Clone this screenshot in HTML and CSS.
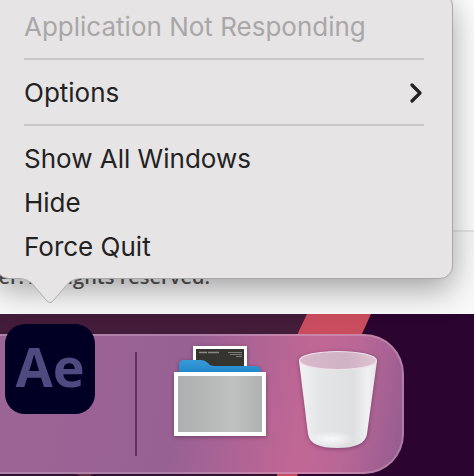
FILE: index.html
```html
<!DOCTYPE html>
<html lang="en">
<head>
    <meta charset="UTF-8">
    <meta name="viewport" content="width=device-width, initial-scale=1.0">
    <title>Dock Menu</title>
    <link rel="stylesheet" href="styles.css">
</head>
<body>
    <div class="browser-window">
        <footer class="page-footer">ber. All rights reserved.</footer>
    </div>

    <div class="desktop">
        <svg class="wallpaper" viewBox="0 0 474 162" preserveAspectRatio="xMinYMin slice" aria-hidden="true">
            <rect width="474" height="162" fill="#2b052f"/>
            <path d="M0 0H308L220 162H0Z" fill="#431c3a"/>
            <path d="M0 140H277V162H0Z" fill="#32102f"/>
            <path d="M307 0H371L297 162H277V140H240Z" fill="#c94d5e"/>
            <path d="M72 158H96L90 162H80Z" fill="#5e2c40"/>
        </svg>
        <div class="dock">
            <button class="dock-app" aria-label="After Effects">Ae</button>
            <span class="dock-divider"></span>
            <button class="dock-item dock-stack" aria-label="Folder stack">
                <svg width="92" height="92" viewBox="0 0 92 92">
                    <defs>
                        <linearGradient id="metal" x1="0" x2="1" y1="0" y2="0">
                            <stop offset="0" stop-color="#adb0b0"/>
                            <stop offset=".3" stop-color="#b4b7b6"/>
                            <stop offset=".65" stop-color="#bfc1c0"/>
                            <stop offset="1" stop-color="#afb2b2"/>
                        </linearGradient>
                        <linearGradient id="folder" x1="0" x2="0" y1="0" y2="1">
                            <stop offset="0" stop-color="#389bd8"/>
                            <stop offset="1" stop-color="#1b82c5"/>
                        </linearGradient>
                    </defs>
                    <path d="M19 0H73V30H19Z" fill="#fff"/>
                    <path d="M22 3H70V30H22Z" fill="#36342f"/>
                    <path d="M25 6.500H45" stroke="#8a8882" stroke-width="1.500" stroke-dasharray="8 1 11"/>
                    <path d="M54 6.500H68M56 8.500H68M62 10.500H68" stroke="#7d7b75" stroke-width="1"/>
                    <path d="M5 30V19Q5 14 10 14H27Q31 14 34 17L36 19Q38 20 41 20H82Q86 20 87 26V30Z" fill="url(#folder)"/>
                    <path d="M0 26H92V90H0Z" fill="#fff"/>
                    <path d="M4 30H88V86H4Z" fill="url(#metal)"/>
                </svg>
            </button>
            <button class="dock-item" aria-label="Trash">
                <svg width="80" height="100" viewBox="0 0 80 100">
                    <defs>
                        <linearGradient id="bin" x1="0" x2="1" y1="0" y2="0">
                            <stop offset="0" stop-color="#f2f2f4"/>
                            <stop offset=".25" stop-color="#e5e6e8"/>
                            <stop offset=".7" stop-color="#dddfe1"/>
                            <stop offset=".88" stop-color="#f1f1f3"/>
                            <stop offset="1" stop-color="#e4e5e7"/>
                        </linearGradient>
                        <linearGradient id="inside" x1="0" x2="1" y1="0" y2="0">
                            <stop offset="0" stop-color="#dab9cd"/>
                            <stop offset=".6" stop-color="#cfb2c5"/>
                            <stop offset="1" stop-color="#dec4d2"/>
                        </linearGradient>
                        <radialGradient id="base">
                            <stop offset="0" stop-color="#fff" stop-opacity=".8"/>
                            <stop offset="1" stop-color="#fff" stop-opacity="0"/>
                        </radialGradient>
                    </defs>
                    <path d="M1 11L10 84Q12 98 39 98Q67 98 69 84L79 11Z" fill="url(#bin)"/>
                    <ellipse cx="33" cy="89" rx="24" ry="8" fill="url(#base)"/>
                    <ellipse cx="40" cy="10.500" rx="38.500" ry="9" fill="url(#inside)" stroke="#eee0e9" stroke-width="1.200"/>
                </svg>
            </button>
        </div>
    </div>

    <div class="dock-menu" role="menu">
        <button class="menu-item" role="menuitem" disabled>Application Not Responding</button>
        <hr class="menu-separator">
        <button class="menu-item" role="menuitem" aria-haspopup="true">
            Options
            <svg width="14" height="20" viewBox="0 0 14 20" aria-hidden="true">
                <path d="M2 2L10 10L2 18" fill="none" stroke="#232223" stroke-width="3.200" stroke-linecap="round" stroke-linejoin="round"/>
            </svg>
        </button>
        <hr class="menu-separator">
        <button class="menu-item" role="menuitem">Show All Windows</button>
        <button class="menu-item" role="menuitem">Hide</button>
        <button class="menu-item" role="menuitem">Force Quit</button>
        <svg class="menu-arrow" width="60" height="28" viewBox="0 0 60 28" aria-hidden="true">
            <path d="M0 0V2Q8 2 13 7.500L26.500 23.500Q30 27.500 33.500 23.500L47 7.500Q52 2 60 2V0Z" fill="#e6e4e5"/>
            <path d="M0 1.500Q8 2 13 7.500L26.500 23.500Q30 27.500 33.500 23.500L47 7.500Q52 2 60 1.500" fill="none" stroke="#b0aeaf"/>
        </svg>
    </div>
</body>
</html>
```

FILE: styles.css
```css
* {
    box-sizing: border-box;
}
body {
    margin: 0;
    min-height: 100vh;
    display: flex;
    flex-direction: column;
    position: relative;
    overflow: hidden;
    font-family: Inter, "Liberation Sans", sans-serif;
}
button {
    border: none;
    background: none;
    padding: 0;
    font-family: inherit;
}

/* Web page behind the menu */
.browser-window {
    flex: 1;
    display: flex;
    flex-direction: column;
    justify-content: flex-end;
    background-color: #fdfdfd;
}
.page-footer {
    height: 84px;
    padding-top: 31px;
    margin-left: -14px;
    border-top: 2px solid #e6e6e6;
    background-color: #f9f9f9;
    color: #555;
    font-family: "Open Sans", sans-serif;
    font-size: 20px;
    font-weight: 600;
    line-height: 28px;
}

/* Dock */
.desktop {
    height: 162px;
    padding: 20px 70px 2px 0;
    position: relative;
    background-color: #2b052f;
}
.wallpaper {
    position: absolute;
    inset: 0;
    width: 100%;
    height: 100%;
}
.dock {
    position: relative;
    height: 140px;
    display: flex;
    align-items: center;
    justify-content: flex-end;
    gap: 32px;
    padding: 0 24px 8px 0;
    border: 2px solid rgba(255, 255, 255, 0.2);
    border-left: none;
    border-radius: 0 40px 40px 0;
    background: linear-gradient(100deg, #9d6595 0%, #986194 45%, #c26795 75%, #b86797 85%, #935b8e 100%) border-box;
}
.dock-app {
    width: 90px;
    height: 90px;
    margin-bottom: 62px;
    border-radius: 20px;
    background-color: #000025;
    color: #4f4b80;
    font-family: "Open Sans", sans-serif;
    font-size: 54px;
    font-weight: 700;
    line-height: 80px;
    padding-bottom: 6px;
}
.dock-divider {
    width: 2px;
    height: 104px;
    margin: 8px 5px 0 8px;
    background-color: #65305f;
}
.dock-stack {
    margin-bottom: 16px;
}
.dock-item svg {
    display: block;
    filter: drop-shadow(0 1px 2px rgba(40, 10, 40, 0.4));
}

/* Context menu */
.dock-menu {
    position: absolute;
    left: -4px;
    right: 21px;
    bottom: 197px;
    padding: 10px 28px 10px 27px;
    border: 1px solid #aaa8a9;
    border-radius: 13px;
    background-color: #e6e4e5;
    box-shadow: 0 10px 32px rgba(0, 0, 0, 0.36);
}
.menu-item {
    display: flex;
    align-items: center;
    justify-content: space-between;
    width: 100%;
    height: 44px;
    padding-top: 2px;
    color: #232223;
    font-size: 26px;
    line-height: 32px;
    text-align: left;
}
.menu-item:disabled {
    color: #a9a7a8;
}
.menu-separator {
    height: 2px;
    margin: 10px 0;
    border: none;
    background-color: #cac8c9;
}
.menu-arrow {
    position: absolute;
    left: 23px;
    top: calc(100% - 1px);
}
```
